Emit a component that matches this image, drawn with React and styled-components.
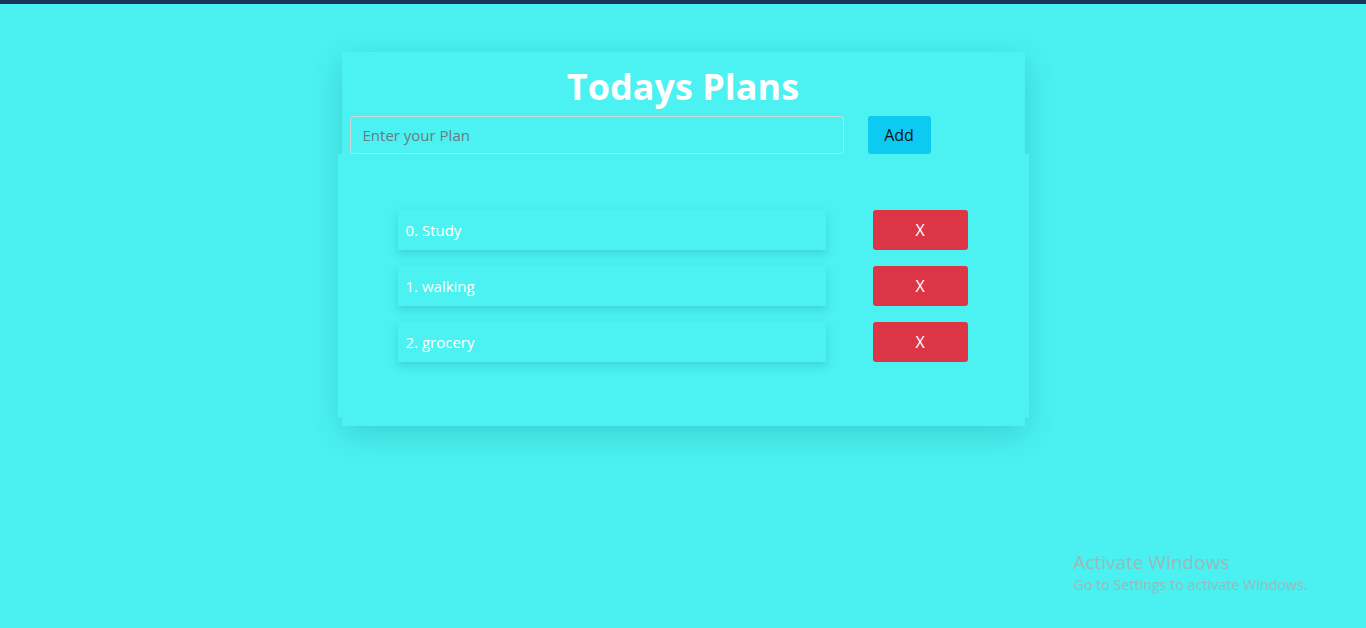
import React, { useState } from "react";
import styled, { createGlobalStyle } from "styled-components";

const GlobalStyle = createGlobalStyle`
  html, body {
    margin: 0;
    padding: 0;
    background: #4af1f0;
    font-family: "Segoe UI", "Open Sans", sans-serif;
  }
  * { box-sizing: border-box; }
`;

const Page = styled.div`
  min-height: 628px;
  border-top: 4px solid #1c3558;
  padding-top: 48px;
`;

const Card = styled.div`
  width: 683px;
  margin: 0 auto;
  padding-bottom: 8px;
  background: #4bf2f1;
  box-shadow: 0 8px 30px rgba(0, 80, 90, 0.2);
`;

const Header = styled.div`
  padding: 0 8px;
`;

const Title = styled.h1`
  margin: 0;
  height: 64px;
  padding-top: 9px;
  text-align: center;
  color: #fff;
  font-size: 36px;
  font-weight: 700;
  line-height: 52px;
`;

const Form = styled.form`
  display: flex;
  gap: 24px;
`;

const Input = styled.input`
  width: 494px;
  height: 38px;
  padding: 0 12px;
  background: transparent;
  border: 1px solid #cfd6d8;
  border-radius: 3px;
  font-family: inherit;
  font-size: 15px;
  color: #222;
  outline: none;
  &::placeholder {
    color: #6c7a80;
  }
`;

const AddButton = styled.button`
  width: 63px;
  height: 38px;
  border: none;
  border-radius: 3px;
  background: #0dcaf0;
  color: #111;
  font-family: inherit;
  font-size: 16px;
  cursor: pointer;
`;

const ListPanel = styled.div`
  margin: 0 -4px;
  padding: 56px 61px 56px 60px;
  background: #4bf2f1;
  display: flex;
  flex-direction: column;
  gap: 16px;
`;

const Row = styled.div`
  display: flex;
  align-items: center;
  gap: 47px;
`;

const Item = styled.div`
  width: 428px;
  height: 40px;
  padding-left: 8px;
  display: flex;
  align-items: center;
  color: #fff;
  font-size: 15px;
  background: #4bf2f1;
  box-shadow: 0 4px 9px rgba(0, 90, 100, 0.18);
`;

const DeleteButton = styled.button`
  width: 95px;
  height: 40px;
  border: none;
  border-radius: 3px;
  background: #dc3545;
  color: #fff;
  font-family: inherit;
  font-size: 16px;
  cursor: pointer;
`;

const Watermark = styled.div`
  position: fixed;
  left: 1073px;
  top: 551px;
  color: #9fb4b6;
  font-family: "Segoe UI", "Open Sans", sans-serif;
  line-height: 1.2;
`;

const WatermarkTitle = styled.div`
  font-size: 19px;
`;

const WatermarkSub = styled.div`
  font-size: 14.3px;
  margin-top: 2px;
`;

export default function App() {
  const [plans, setPlans] = useState(["Study", "walking", "grocery"]);
  const [text, setText] = useState("");

  const addPlan = (e) => {
    e.preventDefault();
    if (text.trim()) {
      setPlans([...plans, text.trim()]);
      setText("");
    }
  };

  const removePlan = (idx) => {
    setPlans(plans.filter((_, i) => i !== idx));
  };

  return (
    <Page>
      <GlobalStyle />
      <Card>
        <Header>
          <Title>Todays Plans</Title>
          <Form onSubmit={addPlan}>
            <Input
              placeholder="Enter your Plan"
              value={text}
              onChange={(e) => setText(e.target.value)}
            />
            <AddButton type="submit">Add</AddButton>
          </Form>
        </Header>
        <ListPanel>
          {plans.map((plan, i) => (
            <Row key={i}>
              <Item>
                {i}. {plan}
              </Item>
              <DeleteButton onClick={() => removePlan(i)}>X</DeleteButton>
            </Row>
          ))}
        </ListPanel>
      </Card>
      <Watermark>
        <WatermarkTitle>Activate Windows</WatermarkTitle>
        <WatermarkSub>Go to Settings to activate Windows.</WatermarkSub>
      </Watermark>
    </Page>
  );
}
